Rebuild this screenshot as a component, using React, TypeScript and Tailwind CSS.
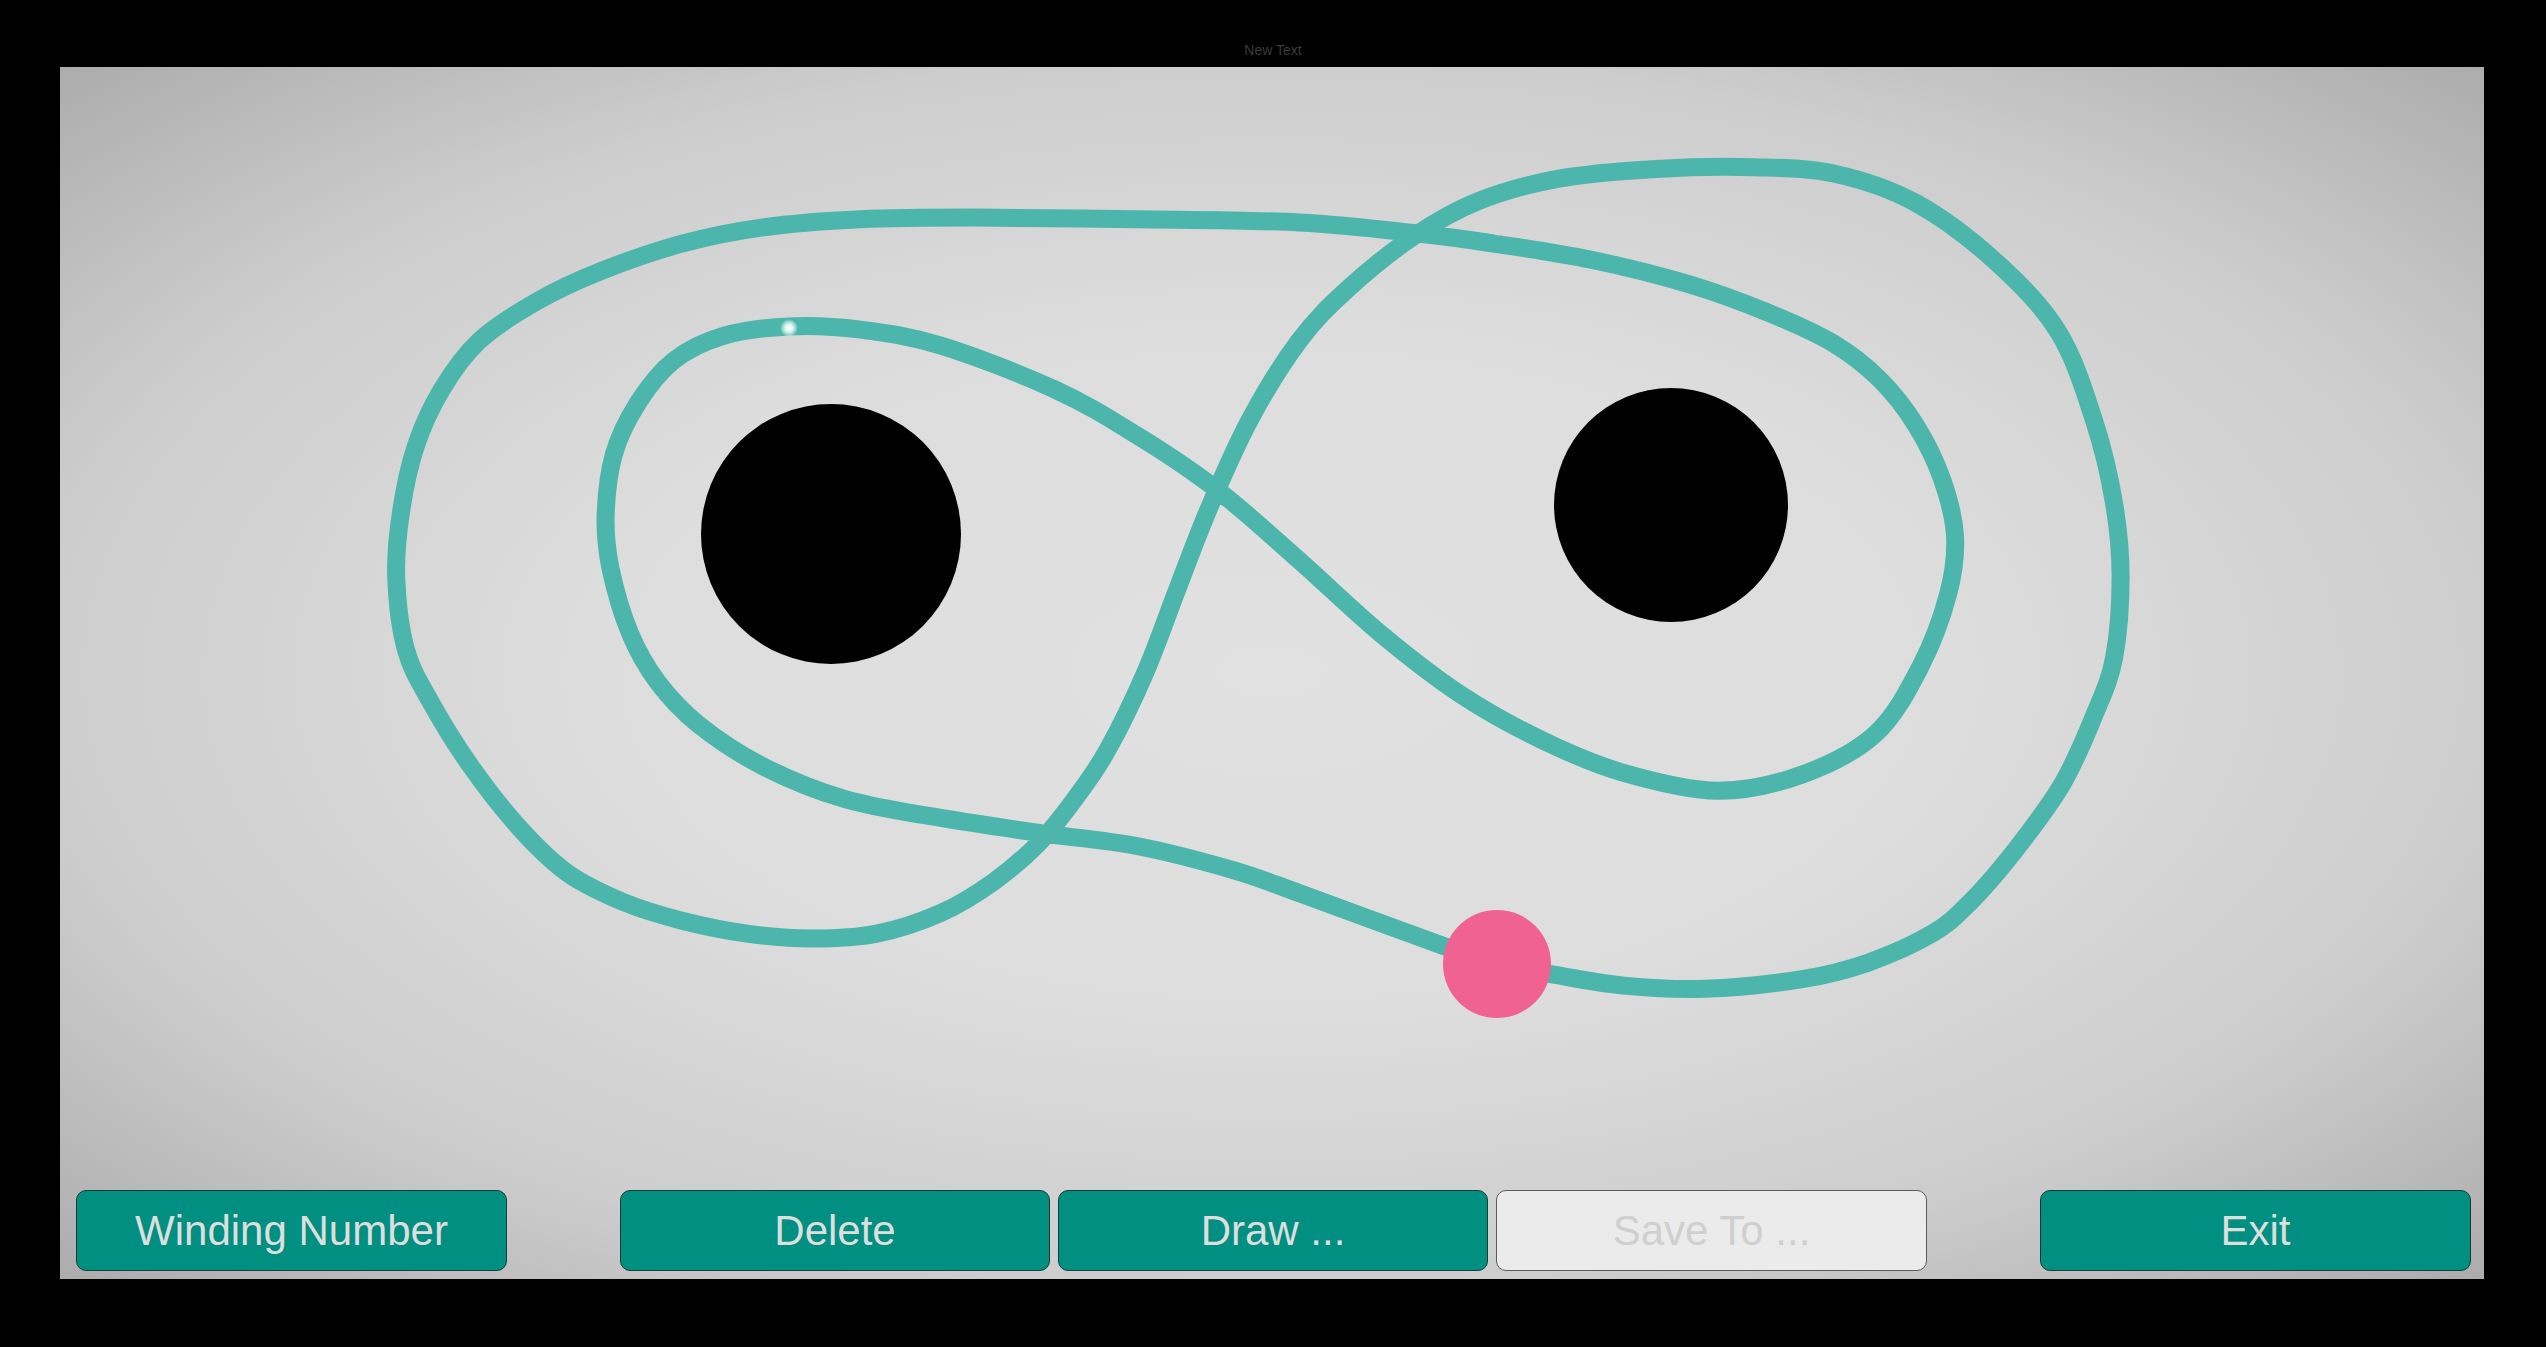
import { type ReactNode } from 'react'

type Pt = [number, number]

// traced on the half-size screenshot, scaled up below; starts at the pink marker
const traced: Pt[] = [
  [922, 594], [860, 572], [800, 550], [760, 536], [700, 521], [640, 513], [575, 503], [520, 492],
  [470, 472], [430, 446], [405, 420], [388, 390], [376, 350], [373, 318], [378, 280], [393, 248],
  [415, 222], [445, 207], [486, 201], [530, 203], [580, 213], [650, 240], [700, 268], [750, 302],
  [800, 345], [850, 390], [900, 428], [950, 456], [1000, 476], [1058, 487], [1110, 477], [1155, 452],
  [1183, 410], [1200, 365], [1204, 330], [1196, 295], [1180, 262], [1158, 234], [1130, 212],
  [1090, 193], [1040, 175], [980, 160], [920, 150], [875, 144], [800, 137], [700, 135], [600, 134],
  [530, 135], [470, 140], [420, 150], [370, 167], [330, 186], [295, 210], [272, 240], [256, 275],
  [247, 315], [244, 355], [250, 400], [265, 432], [290, 472], [320, 510], [350, 538], [385, 556],
  [420, 567], [460, 575], [500, 578], [540, 575], [580, 562], [612, 543], [640, 519], [662, 492],
  [682, 462], [705, 415], [725, 363], [745, 312], [770, 258], [800, 210], [830, 178], [870, 146],
  [910, 124], [960, 110], [1020, 104], [1080, 103], [1130, 107], [1180, 125], [1230, 162],
  [1268, 205], [1290, 260], [1302, 310], [1306, 355], [1302, 405], [1290, 440], [1270, 483],
  [1240, 525], [1213, 556], [1190, 575], [1150, 593], [1110, 603], [1050, 609], [1000, 607],
  [955, 600],
]

const SCALE = 2546 / 1568
const curve: Pt[] = traced.map(([x, y]) => [x * SCALE, y * SCALE])

function smoothClosed(pts: Pt[]) {
  const n = pts.length
  const f = (v: number) => v.toFixed(1)
  let d = `M${f(pts[0][0])},${f(pts[0][1])}`
  for (let i = 0; i < n; i++) {
    const p0 = pts[(i - 1 + n) % n]
    const p1 = pts[i]
    const p2 = pts[(i + 1) % n]
    const p3 = pts[(i + 2) % n]
    const c1x = p1[0] + (p2[0] - p0[0]) / 6
    const c1y = p1[1] + (p2[1] - p0[1]) / 6
    const c2x = p2[0] - (p3[0] - p1[0]) / 6
    const c2y = p2[1] - (p3[1] - p1[1]) / 6
    d += ` C${f(c1x)},${f(c1y)} ${f(c2x)},${f(c2y)} ${f(p2[0])},${f(p2[1])}`
  }
  return d + 'Z'
}

function Drawing() {
  return (
    <svg className="absolute inset-0 h-full w-full" viewBox="60 67 2424 1212">
      <defs>
        <radialGradient id="glow">
          <stop offset="0%" stopColor="#ffffff" stopOpacity="1" />
          <stop offset="45%" stopColor="#e8fbf8" stopOpacity="0.9" />
          <stop offset="100%" stopColor="#ffffff" stopOpacity="0" />
        </radialGradient>
      </defs>
      <circle cx={831} cy={534} r={130} fill="#000" />
      <circle cx={1671} cy={505} r={117} fill="#000" />
      <path d={smoothClosed(curve)} fill="none" stroke="#4db6ac" strokeWidth={18} strokeLinejoin="round" />
      <circle cx={789} cy={328} r={9} fill="url(#glow)" />
      <circle cx={1497} cy={964} r={54} fill="#f06292" />
    </svg>
  )
}

function Btn({ children, width, disabled = false, className = '' }: { children: ReactNode; width: string; disabled?: boolean; className?: string }) {
  return (
    <div
      className={`flex h-[81px] ${width} items-center justify-center rounded-[10px] border ${
        disabled ? 'border-[#5a5a5a] bg-[#ebebeb] text-[#cfcfcf]' : 'border-[#1d3a36] bg-[#008f80] text-[#dedede]'
      } ${className}`}
    >
      <span className="font-['Liberation_Sans',Arial,sans-serif] text-[42px] leading-none">{children}</span>
    </div>
  )
}

export default function App() {
  return (
    <div className="flex h-[1347px] w-[2546px] flex-col bg-black font-['Liberation_Sans',Arial,sans-serif]">
      <div className="flex h-[67px] items-start justify-center pt-[41px]">
        <span className="text-[14px] leading-[18px] text-[#3b3b3b]">New Text</span>
      </div>
      <div className="relative ml-[60px] flex h-[1212px] w-[2424px] flex-col justify-end bg-[radial-gradient(ellipse_at_center,#e1e1e1_0%,#dddddd_40%,#cdcdcd_72%,#acacac_100%)] pb-[8px]">
        <Drawing />
        <div className="relative flex pl-[16px]">
          <Btn width="w-[431px]">Winding Number</Btn>
          <Btn width="w-[430px]" className="ml-[113px]">Delete</Btn>
          <Btn width="w-[430px]" className="ml-[8px]">Draw ...</Btn>
          <Btn width="w-[431px]" className="ml-[8px]" disabled>Save To ...</Btn>
          <Btn width="w-[431px]" className="ml-[113px]">Exit</Btn>
        </div>
      </div>
    </div>
  )
}
